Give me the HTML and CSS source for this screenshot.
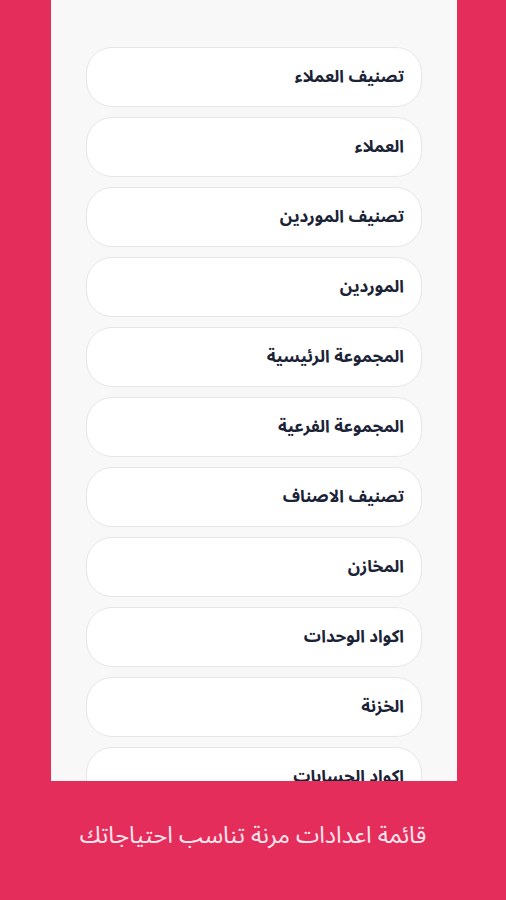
FILE: index.html
```html
<!DOCTYPE html>
<html lang="ar" dir="rtl">
<head>
  <meta charset="UTF-8">
  <meta name="viewport" content="width=device-width, initial-scale=1.0">
  <title>قائمة اعدادات</title>
  <link rel="stylesheet" href="styles.css">
</head>
<body>

<div class="screen">
  <ul class="menu">
    <li class="menu-item">تصنيف العملاء</li>
    <li class="menu-item">العملاء</li>
    <li class="menu-item">تصنيف الموردين</li>
    <li class="menu-item">الموردين</li>
    <li class="menu-item">المجموعة الرئيسية</li>
    <li class="menu-item">المجموعة الفرعية</li>
    <li class="menu-item">تصنيف الاصناف</li>
    <li class="menu-item">المخازن</li>
    <li class="menu-item">اكواد الوحدات</li>
    <li class="menu-item">الخزنة</li>
    <li class="menu-item">اكواد الحسابات</li>
  </ul>
</div>

<p class="caption">قائمة اعدادات مرنة تناسب احتياجاتك</p>

</body>
</html>
```

FILE: styles.css
```css
html, body {
  margin: 0;
  height: 100%;
}

body {
  background-color: #e52d5c;
  font-family: "Noto Sans Arabic", "Noto Sans", "DejaVu Sans", sans-serif;
  overflow: hidden;
}

.screen {
  height: 781px;
  margin: 0 49px 0 51px;
  background-color: #f8f8f8;
  overflow: hidden;
}

.menu {
  list-style: none;
  margin: 0;
  padding: 47px 35px 0 35px;
  display: flex;
  flex-direction: column;
  gap: 10px;
}

.menu-item {
  height: 60px;
  box-sizing: border-box;
  border: 1px solid #e6e6e6;
  border-radius: 26px;
  background-color: #ffffff;
  display: flex;
  align-items: center;
  padding-right: 17px;
  font-size: 17px;
  font-weight: bold;
  color: #1b2336;
}

.caption {
  margin: 30px 0 0 0;
  text-align: center;
  color: #fde6ec;
  font-size: 23.5px;
}
```
